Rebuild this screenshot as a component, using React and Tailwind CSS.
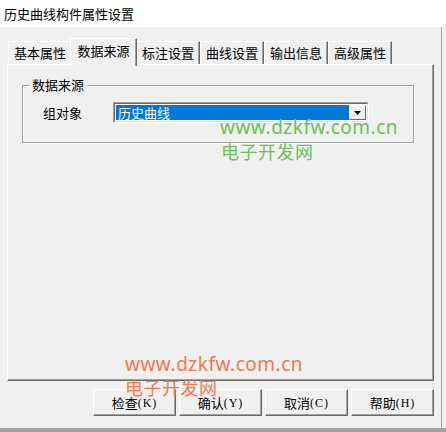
import React from "react";

const cjk = { fontFamily: '"Noto Sans CJK SC", "Noto Sans", sans-serif' };

function Tab({ label, active }) {
  if (active) {
    return (
      <div className="relative z-10 -mb-[2px] h-[28px] w-[67px] border-t border-l border-r border-t-white border-l-white border-r-[#696969] bg-[#f0f0f0] flex items-start justify-center pt-[4px] text-[13px] leading-[16px] text-black -ml-[2px] -mr-[1px] shadow-[inset_-1px_0_0_#a0a0a0]">
        {label}
      </div>
    );
  }
  return (
    <div className="h-[23px] w-[64px] border-t border-l border-r border-t-white border-l-white border-r-[#696969] bg-[#f0f0f0] flex items-center justify-center text-[13px] leading-[16px] text-black shadow-[inset_-1px_0_0_#a0a0a0]">
      {label}
    </div>
  );
}

function Btn({ label, k }) {
  return (
    <div className="w-[83px] h-[27px] border border-t-white border-l-white border-r-[#696969] border-b-[#696969] bg-[#f0f0f0] shadow-[inset_-1px_-1px_0_#a0a0a0] flex items-center justify-center text-[12px] text-black">
      <span style={cjk} className="text-[13px]">{label}</span>
      <span style={{ fontFamily: '"Liberation Serif", serif' }} className="text-[12px] tracking-[1px]">({k})</span>
    </div>
  );
}

export default function App() {
  return (
    <div className="relative w-[446px] h-[432px] bg-[#f0f0f0] overflow-hidden" style={cjk}>
      <div className="h-[27px] bg-white flex items-center pl-[4px] text-[13px] text-black">
        历史曲线构件属性设置
      </div>
      <div className="flex items-end h-[37px] pl-[8px]">
        <Tab label="基本属性" />
        <Tab label="数据来源" active />
        <Tab label="标注设置" />
        <Tab label="曲线设置" />
        <Tab label="输出信息" />
        <Tab label="高级属性" />
      </div>
      <div className="ml-[7px] w-[427px] h-[317px] border border-t-white border-l-white border-r-[#696969] border-b-[#696969] shadow-[inset_-1px_-1px_0_#a0a0a0] pt-[20px] pl-[14px]">
        <div className="relative w-[392px] h-[58px] border border-[#a0a0a0] shadow-[inset_1px_1px_0_white,1px_1px_0_white]">
          <div className="absolute -top-[10px] left-[6px] bg-[#f0f0f0] px-[3px] text-[13px] leading-[18px] text-black">
            数据来源
          </div>
          <div className="flex items-center mt-[16px]">
            <div className="w-[90px] pl-[20px] text-[13px] leading-[18px] text-black">组对象</div>
            <div className="w-[256px] h-[21px] border border-t-[#a0a0a0] border-l-[#a0a0a0] border-r-white border-b-white flex">
              <div className="flex-1 border border-t-[#696969] border-l-[#696969] border-r-[#e3e3e3] border-b-[#e3e3e3] bg-white p-[1px] flex">
                <div className="flex-1 bg-[#0078d7] text-white text-[13px] leading-[15px] pl-[2px]">历史曲线</div>
                <div className="w-[17px] bg-[#f0f0f0] border border-t-white border-l-white border-r-[#696969] border-b-[#696969] flex items-center justify-center">
                  <svg width="7" height="4" viewBox="0 0 7 4"><path d="M0 0h7L3.5 4z" fill="#000" /></svg>
                </div>
              </div>
            </div>
          </div>
        </div>
      </div>
      <div className="flex justify-end gap-[3px] pr-[12px] mt-[8px]">
        <Btn label="检查" k="K" />
        <Btn label="确认" k="Y" />
        <Btn label="取消" k="C" />
        <Btn label="帮助" k="H" />
      </div>
      <div className="absolute left-[441px] top-[27px] bottom-0 w-[1px] bg-[#a0a0a0]" />
      <div className="absolute left-0 right-0 bottom-0 h-[4px] bg-[#a0a0a0]" />
      <div className="absolute left-[220px] top-[116px] text-[19px] leading-[22px] text-[#6cbf5a] tracking-[0.5px]" style={{ fontFamily: '"Noto Sans", sans-serif' }}>
        www.dzkfw.com.cn
      </div>
      <div className="absolute left-[221px] top-[140px] text-[18px] leading-[22px] text-[#6cbf5a] tracking-[0.5px]">
        电子开发网
      </div>
      <div className="absolute left-[125px] top-[353px] text-[19px] leading-[22px] text-[#ef7a52] tracking-[0.5px]" style={{ fontFamily: '"Noto Sans", sans-serif' }}>
        www.dzkfw.com.cn
      </div>
      <div className="absolute left-[125px] top-[376px] text-[18px] leading-[22px] text-[#ef7a52] tracking-[0.5px]">
        电子开发网
      </div>
    </div>
  );
}
